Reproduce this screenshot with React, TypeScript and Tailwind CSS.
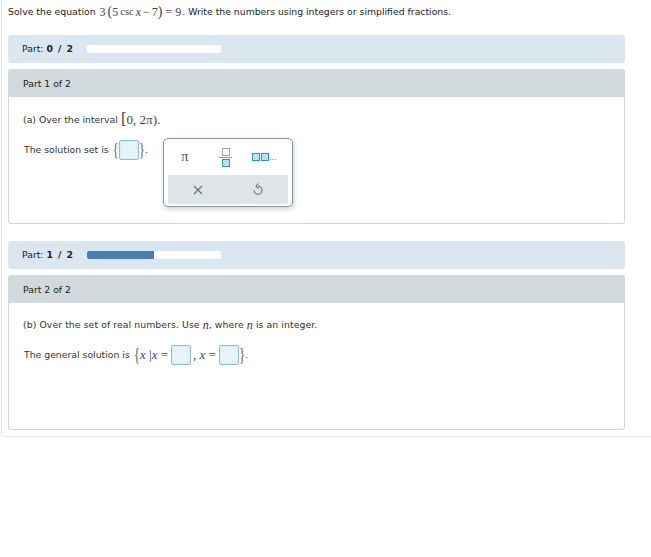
const serif = "font-['Liberation_Serif',serif]";

const AnswerBox = () => (
  <span className="inline-block w-[20px] h-[20px] bg-[#e4f4f8] border border-[#8fc1c9] rounded-[2px] shadow-[inset_0_0_1px_#8fc1c9]" />
);

const Brace = ({ glyph }: { glyph: string }) => (
  <span className={`${serif} inline-block text-[13px] text-[#666] scale-y-150`}>{glyph}</span>
);

const Cross = () => (
  <svg width="10" height="10" viewBox="0 0 10 10" fill="none" stroke="#5d7380" strokeWidth="1.1">
    <path d="M1 1 L9 9 M9 1 L1 9" />
  </svg>
);

const Undo = () => (
  <svg width="10" height="13" viewBox="0 0 10 13" fill="none" stroke="#5d7380" strokeWidth="1.1">
    <path d="M5 3.2 A4 4 0 1 1 1 7.2" />
    <path d="M5.6 0.6 L3 3.2 L5.6 5.6" />
  </svg>
);

const ProgressBar = ({ label, done }: { label: string; done: boolean }) => (
  <div className="h-[28px] flex items-center pl-[14px] bg-[#dae6f0] rounded-[3px]">
    <span className="w-[65px] text-[#222] whitespace-pre">
      Part: <b className="tracking-[0.4px] [word-spacing:1px]">{label}</b>
    </span>
    <div className="w-[134px] h-[8px] bg-white rounded-[2px] overflow-hidden">
      {done && <div className="w-[67px] h-full bg-[#4a7eb8]" />}
    </div>
  </div>
);

const PartHeader = ({ title }: { title: string }) => (
  <div className="h-[28px] flex items-center pl-[14px] pt-[1px] bg-[#d1d9dc] text-[#222]">{title}</div>
);

const Palette = () => (
  <div className="absolute left-[154px] top-[-1px] w-[130px] h-[69px] bg-white border border-[#7f9ca6] rounded-[5px] shadow-[1px_2px_5px_rgba(90,120,130,0.35)] px-[4px] pt-[4px]">
    <div className="h-[32px] flex items-start text-[#44575f]">
      <span className={`${serif} text-[15px] leading-none ml-[13px] mt-[6px] w-[7px]`}>π</span>
      <span className="flex flex-col items-center ml-[31px] mt-[5px] w-[13px]">
        <span className="w-[8px] h-[8px] border border-[#99a5aa]" />
        <span className="w-[13px] h-[1px] bg-[#8a979c] my-[1px]" />
        <span className="w-[8px] h-[8px] border border-[#2a98ab] bg-[#b9e3ea]" />
      </span>
      <span className="flex items-end ml-[20px] mt-[10px]">
        <span className="w-[8px] h-[8px] border border-[#2a98ab] bg-[#b9e3ea]" />
        <span className="w-[8px] h-[8px] ml-[1px] border border-[#2a98ab] bg-[#b9e3ea]" />
        <span className="text-[8px] leading-[6px] text-[#70858d]">...</span>
      </span>
    </div>
    <div className="h-[29px] flex items-center bg-[#dfe5e7] rounded-[2px]">
      <span className="ml-[25px] flex"><Cross /></span>
      <span className="ml-[50px] flex"><Undo /></span>
    </div>
  </div>
);

export default function App() {
  return (
    <div className="h-[557px] bg-white font-['DejaVu_Sans',sans-serif] text-[9.3px] text-[#333]">
      <div className="h-[437px] ml-[1px] pl-[6px] pr-[26px] border-l border-b border-[#e6e9ea] rounded-bl-[3px]">
        <div className="h-[35px] pb-[12px] flex items-center text-[#222]">
          <span>Solve the equation</span>
          <span className={`${serif} flex items-center text-[12px] text-[#444] ml-[4px] mr-[1px] whitespace-pre`}>
            <span>3</span>
            <span className="text-[14px] ml-[2px]">(</span>
            <span>5</span>
            <span className="text-[10.5px] mx-[2px]">csc</span>
            <i>x</i>
            <span className="mx-[2px]">−</span>
            <span>7</span>
            <span className="text-[14px]">)</span>
            <span> = 9</span>
          </span>
          <span>. Write the numbers using integers or simplified fractions.</span>
        </div>

        <ProgressBar label="0 / 2" done={false} />

        <div className="mt-[6px] h-[155px] border border-t-0 border-[#d1d9dc] rounded-[3px]">
          <PartHeader title="Part 1 of 2" />
          <div className="pl-[14px] pt-[14px] h-[17px] box-content flex items-center">
            <span>(a) Over the interval</span>
            <span className={`${serif} text-[13px] text-[#444] ml-[3px]`}>
              <span className="text-[17px] leading-none">[</span>0, 2π).
            </span>
          </div>
          <div className="relative mt-[11px] pl-[15px] h-[22px] flex items-center">
            <span>The solution set is</span>
            <span className="ml-[4px] flex"><Brace glyph="{" /></span>
            <AnswerBox />
            <Brace glyph="}" />
            <span>.</span>
            <Palette />
          </div>
        </div>

        <div className="mt-[17px]">
          <ProgressBar label="1 / 2" done />
        </div>

        <div className="mt-[6px] h-[155px] border border-t-0 border-[#d1d9dc] rounded-[3px]">
          <PartHeader title="Part 2 of 2" />
          <div className="pl-[14px] pt-[13px] h-[17px] box-content flex items-center tracking-[0.08px]">
            <span>(b) Over the set of real numbers. Use</span>
            <i className={`${serif} text-[12px] ml-[3px]`}>n</i>
            <span>, where</span>
            <i className={`${serif} text-[12px] mx-[3px]`}>n</i>
            <span>is an integer.</span>
          </div>
          <div className="mt-[11px] pl-[15px] h-[22px] flex items-center">
            <span>The general solution is</span>
            <span className="ml-[4px] flex"><Brace glyph="{" /></span>
            <span className={`${serif} text-[13px] text-[#444] mr-[3px] whitespace-pre`}>
              <i>x</i> |<i>x</i> =
            </span>
            <AnswerBox />
            <span className={`${serif} text-[13px] text-[#444] ml-[2px] mr-[3px] whitespace-pre`}>
              , <i>x</i> =
            </span>
            <AnswerBox />
            <Brace glyph="}" />
            <span>.</span>
          </div>
        </div>
      </div>
    </div>
  );
}
